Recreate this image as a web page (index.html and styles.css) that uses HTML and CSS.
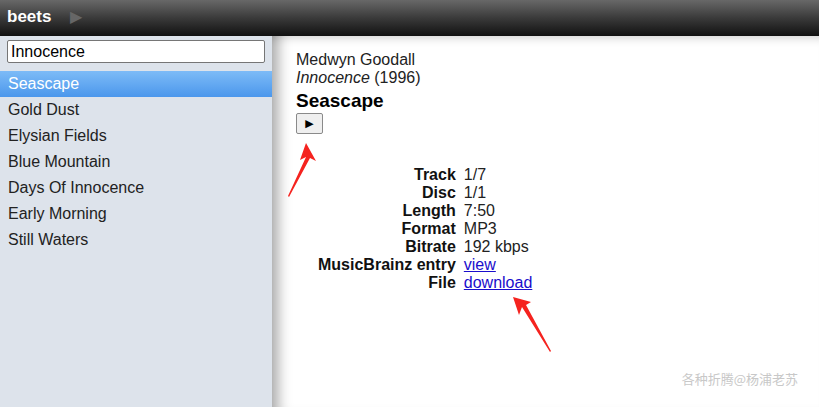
FILE: index.html
```html
<!DOCTYPE html>
<html>
<head>
<meta charset="utf-8">
<link rel="stylesheet" href="styles.css">
</head>
<body>
<header class="topbar">
  <span class="brand">beets</span>
  <span class="now-playing">&#9654;</span>
</header>
<div class="layout">
  <aside class="sidebar">
    <div class="search"><input type="text" value="Innocence"></div>
    <ul class="results">
      <li class="selected">Seascape</li>
      <li>Gold Dust</li>
      <li>Elysian Fields</li>
      <li>Blue Mountain</li>
      <li>Days Of Innocence</li>
      <li>Early Morning</li>
      <li>Still Waters</li>
    </ul>
  </aside>
  <main class="detail">
    <div class="artist">Medwyn Goodall</div>
    <div class="album"><em>Innocence</em> (1996)</div>
    <h1 class="title">Seascape</h1>
    <button class="play">&#9654;</button>
    <table class="info">
      <tr><th>Track</th><td>1/7</td></tr>
      <tr><th>Disc</th><td>1/1</td></tr>
      <tr><th>Length</th><td>7:50</td></tr>
      <tr><th>Format</th><td>MP3</td></tr>
      <tr><th>Bitrate</th><td>192 kbps</td></tr>
      <tr><th>MusicBrainz entry</th><td><a href="#">view</a></td></tr>
      <tr><th>File</th><td><a href="#">download</a></td></tr>
    </table>
    <div class="watermark">各种折腾@杨浦老苏</div>
  </main>
</div>
<svg class="arrow arrow-play" width="40" height="62" viewBox="0 0 40 62">
  <polygon points="21,3 31,21 25,18 4,57 3,56 21,17 15,20" fill="#f5231f"/>
</svg>
<svg class="arrow arrow-dl" width="45" height="62" viewBox="0 0 45 62">
  <polygon points="3,3 21,8 16,11 41,57 40,58 12,13 9,21" fill="#f5231f"/>
</svg>
</body>
</html>
```
FILE: styles.css
```css
html, body {
  margin: 0;
  padding: 0;
  height: 100%;
  overflow: hidden;
}
body {
  font-family: "Liberation Sans", Arial, sans-serif;
  font-size: 16px;
  color: #000;
  background: #fff;
  position: relative;
}
.topbar {
  height: 36px;
  background: linear-gradient(to bottom, #686868 0%, #3a3a3a 50%, #111 100%);
  display: flex;
  align-items: center;
  padding-left: 7px;
  box-sizing: border-box;
}
.brand {
  color: #fff;
  font-weight: bold;
  font-size: 17px;
  margin-top: -3px;
}
.now-playing {
  color: #666;
  font-size: 16px;
  margin-left: 19px;
  margin-top: -3px;
}
.layout {
  display: flex;
  height: 371px;
}
.sidebar {
  width: 272px;
  flex: none;
  background: #dde3eb;
  position: relative;
  z-index: 1;
}
.search {
  padding: 4px 7px 8px 7px;
}
.search input {
  width: 258px;
  height: 23px;
  box-sizing: border-box;
  border: 1px solid #767676;
  border-radius: 2px;
  font-family: "Liberation Sans", Arial, sans-serif;
  font-size: 16px;
  padding: 0 3px;
  color: #000;
  background: #fff;
  margin: 0;
}
.results {
  list-style: none;
  margin: 0;
  padding: 0;
}
.results li {
  height: 26px;
  line-height: 26px;
  padding-left: 8px;
  color: #222;
}
.results li.selected {
  background: linear-gradient(to bottom, #7dbbf7 0%, #4b97ec 100%);
  color: #fff;
}
.detail {
  flex: 1;
  position: relative;
  padding: 15px 0 0 24px;
  box-shadow: inset 18px 0 14px -12px rgba(0,0,0,0.35), inset 0 10px 10px -8px rgba(0,0,0,0.18);
}
.artist, .album {
  line-height: 18px;
  color: #222;
}
.title {
  font-size: 19px;
  font-weight: bold;
  margin: 3px 0 1px 0;
  line-height: 22px;
  color: #000;
}
.play {
  width: 27px;
  height: 21px;
  padding: 0;
  font-size: 11px;
  line-height: 19px;
  border: 1px solid #8a8a8a;
  border-radius: 2px;
  background: #efefef;
  color: #000;
  font-family: "DejaVu Sans", sans-serif;
}
.info {
  border-collapse: collapse;
  margin: 32px 0 0 22px;
}
.info th {
  text-align: right;
  font-weight: bold;
  padding: 0 8px 0 0;
  line-height: 18px;
  color: #111;
}
.info td {
  padding: 0;
  line-height: 18px;
  color: #222;
}
.info a {
  color: #1a0dcc;
  text-decoration: underline;
}
.watermark {
  position: absolute;
  right: 21px;
  bottom: 19px;
  font-family: "Noto Sans CJK SC", sans-serif;
  font-size: 13px;
  color: #c8c8c8;
}
.arrow {
  position: absolute;
}
.arrow-play {
  left: 285px;
  top: 140px;
}
.arrow-dl {
  left: 510px;
  top: 294px;
}
```
